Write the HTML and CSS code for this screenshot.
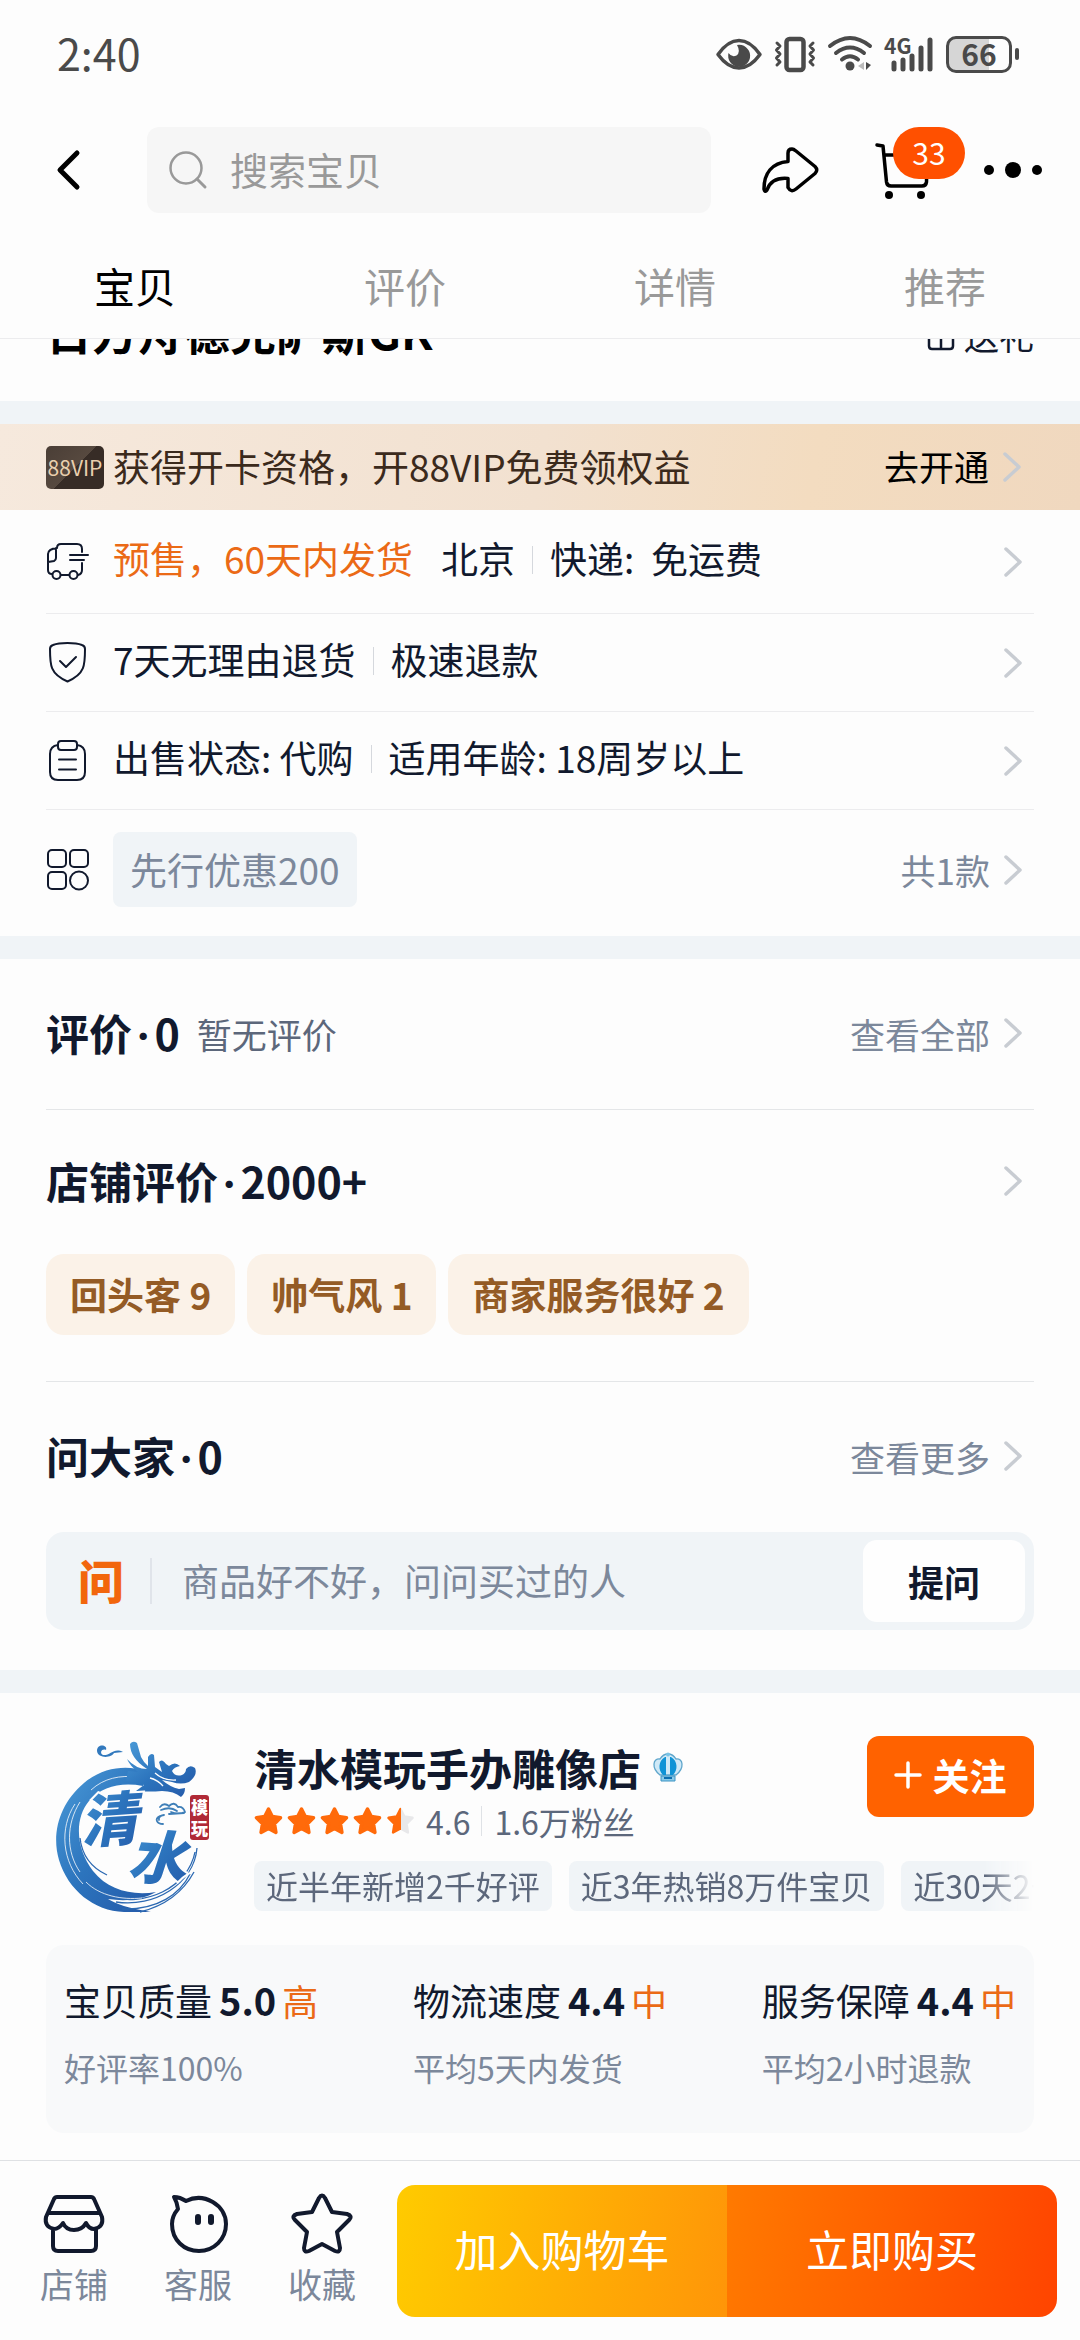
FILE: index.html
```html
<!DOCTYPE html>
<html lang="zh-CN">
<head>
    <meta charset="UTF-8">
    <meta name="viewport" content="width=device-width, initial-scale=1.0">
    <title>宝贝详情</title>
    <link rel="stylesheet" href="styles.css">
</head>
<body>
    <!-- shared icons -->
    <svg class="sprite" aria-hidden="true">
        <symbol id="arrow" viewBox="0 0 18 30">
            <path d="M2 2 L16 15 L2 28" fill="none" stroke="#c8ccd2" stroke-width="3.5" stroke-linecap="round" stroke-linejoin="round"/>
        </symbol>
        <symbol id="star" viewBox="0 0 28 28">
            <path d="M14 2 L17.8 9.6 L26 10.8 L20 16.8 L21.4 25.4 L14 21.4 L6.6 25.4 L8 16.8 L2 10.8 L10.2 9.6 Z" stroke-width="3.5" stroke-linejoin="round"/>
        </symbol>
    </svg>

    <!-- Fixed top part: status bar, search, tabs -->
    <header class="top">
        <div class="status">
            <span class="clock">2:40</span>
            <div class="status-icons">
                <svg width="46" height="36" viewBox="0 0 46 36">
                    <path d="M2 18.500 C10 7 17 4.500 23 4.500 S36 7 44 18.500 C36 29.500 29 32 23 32 S10 29.500 2 18.500 Z" fill="none" stroke="#4a4a4a" stroke-width="3.500" stroke-linejoin="round"/>
                    <path d="M21 9 A11 11 0 1 1 12.500 17 Q16 22 20.500 19.500 Q25 16 21 9 Z" fill="#4a4a4a"/>
                </svg>
                <svg width="42" height="36" viewBox="0 0 42 36">
                    <rect x="12.500" y="3" width="17" height="31" rx="3" fill="none" stroke="#4a4a4a" stroke-width="4.500"/>
                    <path d="M3 7 L6 10 L2.500 14 L6 18 L2.500 22 L6 26 L3 29 M39 7 L36 10 L39.500 14 L36 18 L39.500 22 L36 26 L39 29" fill="none" stroke="#4a4a4a" stroke-width="3" stroke-linecap="round" stroke-linejoin="round"/>
                </svg>
                <svg width="44" height="36" viewBox="0 0 44 36">
                    <path d="M2 10 Q22 -6 42 10 M8 17 Q22 6 36 17 M14 23.500 Q22 17 30 23.500" fill="none" stroke="#4a4a4a" stroke-width="4" stroke-linecap="round"/>
                    <circle cx="22" cy="30" r="4.500" fill="#4a4a4a"/>
                    <path d="M30 30 L36 26 V34 Z" fill="#bbb"/>
                    <path d="M38 26 L43 29 L38 34 Z" fill="#4a4a4a"/>
                </svg>
                <svg width="50" height="36" viewBox="0 0 50 36">
                    <text class="net-label" x="0" y="18">4G</text>
                    <path d="M10 27 V33 M19 24 V33 M28 20 V33 M37 12 V33 M46 4 V33" stroke="#4a4a4a" stroke-width="5" stroke-linecap="round"/>
                </svg>
                <div class="battery"><span>66</span></div>
            </div>
        </div>

        <div class="search-row">
            <button class="icon-btn" aria-label="返回">
                <svg width="24" height="40" viewBox="0 0 24 40"><path d="M21 3 L4 20 L21 37" fill="none" stroke="#000" stroke-width="5" stroke-linecap="round" stroke-linejoin="round"/></svg>
            </button>
            <label class="search">
                <svg width="38" height="38" viewBox="0 0 38 38"><circle cx="17" cy="17" r="15.500" fill="none" stroke="#999" stroke-width="2.500"/><path d="M28 28 L36 36" stroke="#999" stroke-width="3" stroke-linecap="round"/></svg>
                <input type="text" placeholder="搜索宝贝" aria-label="搜索宝贝">
            </label>
            <div class="actions">
                <button class="icon-btn" aria-label="分享">
                    <svg width="57" height="46" viewBox="0 0 57 46"><path d="M26 14.500 V6 Q26 2 30 2 Q31.500 2 34 4 L53 19.500 Q56.500 23 53 26.500 L34 42 Q29 46 26 40.500 V31.500 C15 30.500 8 34.500 5 43 Q3 46 2 42 C2 26 10 16 26 14.500 Z" fill="none" stroke="#000" stroke-width="3.500" stroke-linejoin="round"/></svg>
                </button>
                <button class="icon-btn cart" aria-label="购物车">
                    <svg width="53" height="57" viewBox="0 0 53 57"><path d="M2 3 L8 4 L11.500 40 Q12 44 16 44 H47 Q51 44 51.500 40 L52 13 H9" fill="none" stroke="#000" stroke-width="3.500" stroke-linecap="round" stroke-linejoin="round"/><circle cx="14" cy="53" r="4" fill="#000"/><circle cx="46" cy="53" r="4" fill="#000"/></svg>
                    <span class="badge">33</span>
                </button>
                <button class="icon-btn" aria-label="更多">
                    <svg width="58" height="16" viewBox="0 0 58 16"><circle cx="5" cy="8" r="5"/><circle cx="29" cy="8" r="8"/><circle cx="53" cy="8" r="5"/></svg>
                </button>
            </div>
        </div>

        <nav class="tabs">
            <a class="active" href="#item">宝贝</a>
            <a href="#review">评价</a>
            <a href="#detail">详情</a>
            <a href="#recommend">推荐</a>
        </nav>
    </header>

    <main>
        <!-- Title, scrolled under the header -->
        <section class="title-row" id="item">
            <h1>日方舟德克萨斯GK</h1>
            <a class="gift" href="#gift">
                <svg width="30" height="32" viewBox="0 0 30 32"><path d="M1 8 H29 V15 H1 Z M3 15 V27 Q3 30 6 30 H24 Q27 30 27 27 V15 M15 8 V30" fill="none" stroke="#11192d" stroke-width="2.500"/></svg>
                送礼
            </a>
        </section>

        <!-- VIP banner and item details -->
        <section class="info">
            <a class="vip" href="#vip">
                <span class="vip-tag">88VIP</span>
                <span class="vip-text">获得开卡资格，开88VIP免费领权益</span>
                <span class="vip-go">去开通</span>
                <svg class="arrow"><use href="#arrow"/></svg>
            </a>
            <ul class="rows">
                <li class="row row-delivery">
                    <svg class="row-icon" viewBox="0 0 43 43">
                        <path d="M11 8 Q11 4 15 4 H31 Q36 4 36 9 V12 M11 8 Q2 9 2 14 V30 Q2 34 6 34 M15 35 H23 M32 35 Q36 34 36 30 V23 M2 22 L8 21 Q10 20 10 18 V8 M24 15 H42 M24 20 H38" fill="none" stroke="#11192d" stroke-width="2" stroke-linecap="round"/>
                        <circle cx="10.500" cy="35" r="4" fill="none" stroke="#11192d" stroke-width="2"/>
                        <circle cx="27.500" cy="35" r="4" fill="none" stroke="#11192d" stroke-width="2"/>
                    </svg>
                    <div class="row-text"><span class="presale">预售，60天内发货</span><span class="split">北京</span><span>快递:&nbsp; 免运费</span></div>
                    <svg class="arrow"><use href="#arrow"/></svg>
                </li>
                <li class="row">
                    <svg class="row-icon" viewBox="0 0 43 43">
                        <path d="M21.500 2 Q31 2 36 4 Q39 5 39 8 C39 24 39 33 21.500 40.500 C4 33 4 24 4 8 Q4 5 7 4 Q12 2 21.500 2 Z M14 20 L20 26 L30 16" fill="none" stroke="#11192d" stroke-width="2" stroke-linecap="round" stroke-linejoin="round"/>
                    </svg>
                    <div class="row-text"><span class="split">7天无理由退货</span><span>极速退款</span></div>
                    <svg class="arrow"><use href="#arrow"/></svg>
                </li>
                <li class="row">
                    <svg class="row-icon" viewBox="0 0 43 43">
                        <path d="M12 6 Q4 7 4 15 V33 Q4 41 12 41 H31 Q39 41 39 33 V15 Q39 7 31 6 M13 20.500 H30 M13 30.500 H30" fill="none" stroke="#11192d" stroke-width="2" stroke-linecap="round"/>
                        <rect x="12" y="2" width="19" height="9" rx="3" fill="none" stroke="#11192d" stroke-width="2"/>
                    </svg>
                    <div class="row-text"><span class="split">出售状态: 代购</span><span>适用年龄: 18周岁以上</span></div>
                    <svg class="arrow"><use href="#arrow"/></svg>
                </li>
                <li class="row row-sku">
                    <svg class="row-icon" viewBox="0 0 43 43">
                        <g fill="none" stroke="#11192d" stroke-width="2">
                            <rect x="2" y="2" width="18" height="17" rx="4"/><rect x="24" y="2" width="18" height="17" rx="4"/>
                            <rect x="2" y="24" width="18" height="17" rx="4"/><circle cx="33" cy="32.500" r="9"/>
                        </g>
                    </svg>
                    <span class="sku">先行优惠200</span>
                    <span class="more">共1款</span>
                    <svg class="arrow"><use href="#arrow"/></svg>
                </li>
            </ul>
        </section>

        <!-- Reviews and questions -->
        <section class="panel" id="review">
            <div class="block">
                <div class="block-head">
                    <h2>评价<span class="dot">·</span>0</h2>
                    <span class="empty">暂无评价</span>
                    <a class="more" href="#all">查看全部</a>
                    <svg class="arrow"><use href="#arrow"/></svg>
                </div>
            </div>
            <div class="block">
                <div class="block-head shop-review">
                    <h2>店铺评价<span class="dot">·</span>2000+</h2>
                    <svg class="arrow"><use href="#arrow"/></svg>
                </div>
                <div class="chips">
                    <button>回头客 9</button>
                    <button>帅气风 1</button>
                    <button>商家服务很好 2</button>
                </div>
            </div>
            <div class="block">
                <div class="block-head">
                    <h2>问大家<span class="dot">·</span>0</h2>
                    <a class="more" href="#ask">查看更多</a>
                    <svg class="arrow"><use href="#arrow"/></svg>
                </div>
                <div class="ask">
                    <span class="ask-mark">问</span>
                    <input type="text" placeholder="商品好不好，问问买过的人" aria-label="提问内容">
                    <button>提问</button>
                </div>
            </div>
        </section>

        <!-- Shop card -->
        <section class="shop">
            <div class="shop-top">
                <svg class="shop-logo" viewBox="0 6 180 176" role="img" aria-label="清水模玩">
                    <defs>
                        <linearGradient id="ink" x1="0" y1="0" x2="1" y2="1">
                            <stop offset="0" stop-color="#4b9bd8"/>
                            <stop offset="0.500" stop-color="#2c74bd"/>
                            <stop offset="1" stop-color="#2458a8"/>
                        </linearGradient>
                    </defs>
                    <!-- brush ring -->
                    <path d="M100 41 C82 35 58 36 38 53 C14 73 5 103 13 130 C22 160 48 181 78 182 L105 182 C82 178 70 174 62 169 C82 172 98 169 110 162 C86 166 62 160 47 141 C30 119 28 89 43 71 C56 56 76 52 97 56 Z" fill="url(#ink)"/>
                    <path d="M62 166 C98 178 142 158 149 122 M70 172 C108 178 148 154 151 118 M76 179 C112 180 134 164 144 144 M94 182 C118 176 136 164 148 142 M34 108 C36 126 46 138 61 145" fill="none" stroke="#2c69b2" stroke-width="1.300"/>
                    <path d="M29 74 C13 98 16 132 37 154 M34 72 C20 94 20 122 34 142 M40 152 C54 166 76 170 96 168 M45 60 C58 48 74 45 92 47" fill="none" stroke="#fdfdfd" stroke-width="0.800"/>
                    <!-- dragon head -->
                    <path d="M84 14 Q87 10 91 13 L95 27 Q98 33 102 36 L102 27 Q105 22 108 25 L109 37 L116 42 L113 32 Q116 28 120 34 L123 36 Q129 31 134 36 Q128 37 126 41 Q129 47 136 45 Q140 43 140 39 Q144 34 149 38 Q152 45 143 52 Q135 55 126 52 L116 50 Q124 57 133 59 L139 58 Q139 64 135 67 Q128 61 116 61 Q103 62 90 61 L98 55 Q90 52 80 51 L82 41 L92 42 Q84 36 81 29 Q90 39 101 39 Q84 28 84 14 Z" fill="url(#ink)"/>
                    <path d="M109 43 Q118 51 130 50 M104 48 Q112 50 117 56" fill="none" stroke="#fdfdfd" stroke-width="1.300"/>
                    <path d="M77 22 C68 17 64 26 57 25 C53 23 56 18 60 20 C62 15 51 13 51 21 C52 29 66 28 68 23 Z" fill="#3279bd"/>
                    <path d="M114 77 Q118 72 123 76 Q128 71 132 77 Q137 76 139 82 Q132 85 125 82 M115 80 Q124 76 131 81 M114 86 C108 89 111 94 117 94 M118 85 Q112 86 113 90 M123 84 L138 83" fill="none" stroke="#3f7fb8" stroke-width="1.800" stroke-linecap="round"/>
                    <g class="logo-ink" fill="url(#ink)">
                        <text x="0" y="0" transform="translate(35 113) rotate(-4)">清</text>
                        <text x="0" y="0" transform="translate(81 147) rotate(4)">水</text>
                    </g>
                    <rect x="144" y="65" width="19" height="45" rx="3" fill="#b02a37"/>
                    <g class="logo-seal">
                        <text x="145" y="84">模</text>
                        <text x="145" y="105">玩</text>
                    </g>
                </svg>
                <div class="shop-body">
                    <div class="shop-head">
                        <div class="shop-info">
                            <h2>
                                清水模玩手办雕像店
                                <svg width="30" height="30" viewBox="0 0 30 30">
                                    <path d="M7 23 C-2 16 0 6 7 7 Q10 2 15 2 T23 7 C30 6 32 16 23 23 Z" fill="#cfe9f7" stroke="#5fa6cc" stroke-width="1.300"/>
                                    <path d="M12 5 C5 9 5 18 10 23 L13 23 V5 Z M18 5 C25 9 25 18 20 23 L17 23 V5 Z" fill="#0f93d6"/>
                                    <circle cx="15" cy="2.500" r="2" fill="#79c3e6"/>
                                    <path d="M8 24 H22 V29 H8 Z" fill="#8ccbe9" stroke="#3c94c4" stroke-width="1"/>
                                    <path d="M11 26 H19" stroke="#0b6fb0" stroke-width="2"/>
                                </svg>
                            </h2>
                            <div class="rating">
                                <div class="stars">
                                    <svg><use href="#star"/></svg>
                                    <svg><use href="#star"/></svg>
                                    <svg><use href="#star"/></svg>
                                    <svg><use href="#star"/></svg>
                                    <svg class="half" viewBox="0 0 28 28">
                                        <defs>
                                            <linearGradient id="half"><stop offset="0.500" stop-color="#ff6a0a"/><stop offset="0.500" stop-color="#e8e8ea"/></linearGradient>
                                        </defs>
                                        <path d="M14 2 L17.800 9.600 L26 10.800 L20 16.800 L21.400 25.400 L14 21.400 L6.600 25.400 L8 16.800 L2 10.800 L10.200 9.600 Z" fill="url(#half)" stroke="url(#half)" stroke-width="2.500" stroke-linejoin="round"/>
                                    </svg>
                                </div>
                                <span class="score">4.6</span>
                                <span class="fans">1.6万粉丝</span>
                            </div>
                        </div>
                        <button class="follow">
                            <svg width="26" height="26" viewBox="0 0 26 26"><path d="M13 1 V25 M1 13 H25" stroke="#fff" stroke-width="3.500" stroke-linecap="round"/></svg>
                            关注
                        </button>
                    </div>
                    <ul class="shop-tags">
                        <li>近半年新增2千好评</li>
                        <li>近3年热销8万件宝贝</li>
                        <li>近30天2千人购买</li>
                    </ul>
                </div>
            </div>
            <div class="metrics">
                <div class="metric">
                    <p class="metric-name">宝贝质量<strong>5.0</strong><em>高</em></p>
                    <p class="metric-note">好评率100%</p>
                </div>
                <div class="metric">
                    <p class="metric-name">物流速度<strong>4.4</strong><em>中</em></p>
                    <p class="metric-note">平均5天内发货</p>
                </div>
                <div class="metric">
                    <p class="metric-name">服务保障<strong>4.4</strong><em>中</em></p>
                    <p class="metric-note">平均2小时退款</p>
                </div>
            </div>
        </section>
    </main>

    <!-- Bottom buy bar -->
    <footer class="buy-bar">
        <a class="buy-link" href="#shop">
            <svg width="60" height="60" viewBox="0 0 60 60"><path d="M13 4 H47 Q49 4 50 6 L58 24 Q60 34 50 36 Q45 36 42 30 Q38 37 30 37 Q22 37 19 30 Q15 36 10 36 Q0 34 2 24 L10 6 Q11 4 13 4 Z M5 20 H55 M9 36 V53 Q9 58 14 58 H47 Q52 58 52 53 V36" fill="none" stroke="#11192d" stroke-width="4" stroke-linejoin="round"/></svg>
            店铺
        </a>
        <a class="buy-link" href="#service">
            <svg width="60" height="60" viewBox="0 0 60 60"><path d="M6 4 Q12 4 18 8 C36 -1 58 12 58 31 C58 46 46 58 31 58 C16 58 4 47 4 31 Q4 23 10 16 Q9 9 6 4 Z" fill="none" stroke="#11192d" stroke-width="4" stroke-linejoin="round"/><path d="M30 24 V29 M43 24 V29" stroke="#11192d" stroke-width="6" stroke-linecap="round"/></svg>
            客服
        </a>
        <a class="buy-link" href="#fav">
            <svg width="60" height="60" viewBox="0 0 60 60"><path d="M27 5 Q30 0 33 5 L40 19 L55 21 Q61 23 57 27 L45 39 L48 55 Q48 60 43 58 L30 51 L17 58 Q12 60 12 55 L15 39 L3 27 Q-1 23 5 21 L20 19 Z" fill="none" stroke="#11192d" stroke-width="4" stroke-linejoin="round"/></svg>
            收藏
        </a>
        <div class="buy-btns">
            <button class="add-cart">加入购物车</button>
            <button class="buy-now">立即购买</button>
        </div>
    </footer>
</body>
</html>
```
FILE: styles.css
```css
* {
    box-sizing: border-box;
}

body {
    margin: 0;
    min-height: 100vh;
    display: flex;
    flex-direction: column;
    background-color: #fdfdfd;
    color: #11192d;
    font-family: "Noto Sans CJK SC", sans-serif;
    font-size: 37px;
}

h1, h2, p, ul {
    margin: 0;
    padding: 0;
}

ul {
    list-style: none;
}

a {
    color: inherit;
    text-decoration: none;
}

button, input {
    font-family: inherit;
    color: inherit;
    border: none;
    padding: 0;
    background: none;
}

button {
    cursor: pointer;
}

svg {
    display: block;
    flex: none;
    overflow: visible;
}

.sprite {
    width: 0;
    height: 0;
    position: absolute;
}

main {
    flex: 1;
}

.arrow {
    width: 18px;
    height: 30px;
    margin: 0 13px 0 14px;
}

/* Header */
.top {
    position: sticky;
    top: 0;
    z-index: 2;
    background-color: #fdfdfd;
    border-bottom: 1px solid #ececee;
}

.status {
    display: flex;
    justify-content: space-between;
    align-items: center;
    height: 108px;
    padding: 0 68px 0 57px;
    color: #4a4a4a;
}

.clock {
    padding-bottom: 4px;
    font-size: 43px;
    line-height: 54px;
}

.status-icons {
    display: flex;
    align-items: center;
    gap: 12px;
}

.net-label {
    font-size: 21px;
    font-weight: bold;
    fill: #4a4a4a;
}

.battery {
    position: relative;
    width: 66px;
    height: 37px;
    border: 3px solid #4a4a4a;
    border-radius: 10px;
    background: linear-gradient(to right, #d6d6d6 66%, #fdfdfd 66%);
    text-align: center;
    font-size: 30px;
    font-weight: bold;
    line-height: 28px;
}

.battery::after {
    content: "";
    position: absolute;
    right: -10px;
    top: 9px;
    width: 4px;
    height: 12px;
    border-radius: 2px;
    background-color: #4a4a4a;
}

.search-row {
    display: flex;
    align-items: center;
    padding: 19px 38px 0 56px;
}

.icon-btn {
    flex: none;
}

.search {
    flex: 1;
    min-width: 0;
    display: flex;
    align-items: center;
    gap: 23px;
    height: 86px;
    margin: 0 51px 0 67px;
    padding: 0 22px;
    border-radius: 12px;
    background-color: #f6f6f6;
}

.search input {
    flex: 1;
    min-width: 0;
    padding-bottom: 4px;
    font-size: 38px;
}

.search input::placeholder {
    color: #999;
}

.actions {
    display: flex;
    align-items: center;
    gap: 56px;
}

.cart {
    position: relative;
}

.badge {
    position: absolute;
    left: 18px;
    top: -15px;
    width: 72px;
    height: 52px;
    border-radius: 26px;
    background-color: #ff5000;
    color: #fff;
    font-size: 30px;
    line-height: 50px;
    text-align: center;
}

.tabs {
    display: grid;
    grid-template-columns: repeat(4, 1fr);
    padding: 42px 0 23px;
    color: #999;
    font-size: 41px;
    line-height: 60px;
    text-align: center;
}

.tabs .active {
    color: #000;
}

/* Title */
.title-row {
    display: flex;
    justify-content: space-between;
    align-items: flex-end;
    height: 62px;
    padding: 0 46px 48px;
    overflow: hidden;
    line-height: 46px;
}

.title-row h1 {
    color: #000;
    font-size: 46px;
}

.gift {
    display: flex;
    align-items: center;
    gap: 8px;
    font-size: 35px;
    line-height: 36px;
}

/* Item info */
.info, .panel, .shop {
    border-top: 23px solid #f0f4f7;
}

.vip {
    display: flex;
    align-items: center;
    height: 86px;
    padding: 0 46px;
    background: linear-gradient(100deg, #f6e9dd, #f2e1d0 50%, #f3dcc0 75%, #f0d8bf);
}

.vip-tag {
    width: 58px;
    margin-right: 9px;
    border-radius: 5px;
    background: linear-gradient(135deg, #4a3e36, #57493f 50%, #372c26 50%);
    color: #e9cfae;
    font-size: 21px;
    line-height: 43px;
    text-align: center;
}

.vip-text, .vip-go {
    padding-bottom: 3px;
}

.vip-text {
    flex: 1;
    color: #3b2a1c;
}

.vip-go {
    color: #000;
    font-size: 35px;
}

.rows {
    padding: 0 46px;
}

.row {
    display: flex;
    align-items: center;
    height: 98px;
    border-bottom: 1px solid #ececee;
}

.row .arrow, .block-head .arrow {
    margin-right: 12px;
}

.row-delivery {
    height: 104px;
}

.row-sku {
    height: auto;
    padding: 22px 0 29px;
    border-bottom: none;
}

.row-icon {
    width: 43px;
    height: 43px;
    margin-right: 24px;
}

.row-text {
    flex: 1;
    display: flex;
    align-items: center;
    padding-bottom: 7px;
}

.presale {
    margin-right: 28px;
    color: #eb6a16;
}

.split::after {
    content: "";
    display: inline-block;
    width: 1px;
    height: 28px;
    margin: 0 17px;
    background-color: #d5d8dd;
}

.sku {
    padding: 0 17px;
    border-radius: 8px;
    background-color: #f0f4f7;
    color: #7c889b;
    line-height: 75px;
}

.more {
    margin-left: auto;
    color: #7c889b;
    font-size: 35px;
}

/* Reviews */
.panel {
    padding: 0 46px 40px;
}

.block + .block {
    border-top: 1px solid #e4e6e8;
}

.block-head {
    display: flex;
    align-items: center;
    height: 150px;
    padding-bottom: 2px;
}

.block-head h2, .shop-info h2 {
    font-size: 43px;
    line-height: 60px;
}

.block-head h2 + .arrow {
    margin-left: auto;
}

.shop-review {
    height: 144px;
}

.dot {
    margin: 0 4px;
    font-family: Inter, sans-serif;
}

.empty {
    margin-left: 17px;
    color: #5c677b;
    font-size: 35px;
}

.chips {
    display: flex;
    gap: 12px;
    padding-bottom: 46px;
}

.chips button {
    padding: 0 24px;
    border-radius: 18px;
    background-color: #fbf2e8;
    color: #945b25;
    font-size: 37px;
    font-weight: bold;
    line-height: 81px;
}

.ask {
    display: flex;
    align-items: center;
    height: 98px;
    padding: 8px 9px 8px 32px;
    border-radius: 18px;
    background-color: #f0f4f7;
}

.ask-mark {
    padding: 0 26px 4px 0;
    border-right: 2px solid #e0e4ea;
    color: #f2660c;
    font-size: 46px;
    font-weight: 900;
    line-height: 42px;
}

.ask input {
    flex: 1;
    min-width: 0;
    margin-left: 30px;
    padding-bottom: 3px;
    font-size: 37px;
}

.ask input::placeholder {
    color: #7c889b;
}

.ask button {
    width: 162px;
    border-radius: 14px;
    background-color: #fefefe;
    font-size: 36px;
    font-weight: bold;
    line-height: 82px;
}

/* Shop */
.shop {
    padding: 43px 46px 27px;
}

.shop-top {
    display: flex;
    gap: 28px;
}

.shop-logo {
    width: 180px;
    height: 176px;
}

.logo-ink {
    font-size: 58px;
    font-weight: 900;
    font-style: italic;
    stroke: #fdfdfd;
    stroke-width: 4px;
    paint-order: stroke;
}

.logo-seal {
    font-size: 17px;
    font-weight: 900;
    fill: #fff;
}

.shop-body {
    flex: 1;
    min-width: 0;
}

.shop-head {
    display: flex;
    justify-content: space-between;
    align-items: flex-start;
}

.shop-info h2 {
    display: flex;
    align-items: center;
    gap: 12px;
    height: 66px;
    padding-bottom: 4px;
}

.rating {
    display: flex;
    align-items: center;
    height: 40px;
    padding-bottom: 2px;
    color: #5c677b;
    font-size: 32px;
}

.stars {
    display: flex;
    gap: 4px;
}

.stars svg {
    width: 29px;
    height: 28px;
    fill: #ff6a0a;
    stroke: #ff6a0a;
}

.score {
    margin: 0 11px;
}

.fans {
    padding-left: 12px;
    border-left: 1px solid #dfe2e6;
    line-height: 30px;
}

.follow {
    display: flex;
    justify-content: center;
    align-items: center;
    gap: 12px;
    width: 167px;
    height: 81px;
    padding-bottom: 4px;
    border-radius: 12px;
    background-color: #ff6200;
    color: #fff;
    font-size: 37px;
    font-weight: bold;
}

.shop-tags {
    display: flex;
    gap: 17px;
    margin-top: 19px;
    overflow: hidden;
    -webkit-mask-image: linear-gradient(to right, #000 calc(100% - 50px), transparent);
    mask-image: linear-gradient(to right, #000 calc(100% - 50px), transparent);
}

.shop-tags li {
    flex: none;
    padding: 0 12px 2px;
    border-radius: 8px;
    background-color: #f0f4f7;
    color: #5c677b;
    font-size: 32px;
    line-height: 48px;
}

.metrics {
    display: flex;
    justify-content: space-between;
    margin-top: 33px;
    padding: 35px 18px 46px;
    border-radius: 18px;
    background-color: #f8f9fa;
}

.metric-name {
    display: flex;
    align-items: center;
    margin-bottom: 27px;
    line-height: 40px;
}

.metric-name strong {
    margin: 0 6px 0 7px;
    font-size: 38px;
}

.metric-name em {
    color: #eb6a16;
    font-size: 36px;
    font-style: normal;
}

.metric-note {
    color: #7c889b;
    font-size: 32px;
    line-height: 40px;
}

/* Bottom bar */
.buy-bar {
    position: sticky;
    bottom: 0;
    display: flex;
    align-items: center;
    height: 180px;
    padding: 0 23px 0 12px;
    border-top: 1px solid #dfe1e4;
    background-color: #fdfdfd;
}

.buy-link {
    display: flex;
    flex-direction: column;
    align-items: center;
    gap: 11px;
    width: 124px;
    padding-bottom: 4px;
    color: #7c889b;
    font-size: 34px;
    line-height: 40px;
}

.buy-btns {
    flex: 1;
    display: grid;
    grid-template-columns: 1fr 1fr;
    margin-left: 13px;
    border-radius: 18px;
    overflow: hidden;
}

.buy-btns button {
    padding-bottom: 5px;
    color: #fff;
    font-size: 43px;
    line-height: 127px;
}

.add-cart {
    background: linear-gradient(100deg, #ffcb00, #ff9508);
}

.buy-now {
    background: linear-gradient(100deg, #ff7a00, #ff4400);
}
```
